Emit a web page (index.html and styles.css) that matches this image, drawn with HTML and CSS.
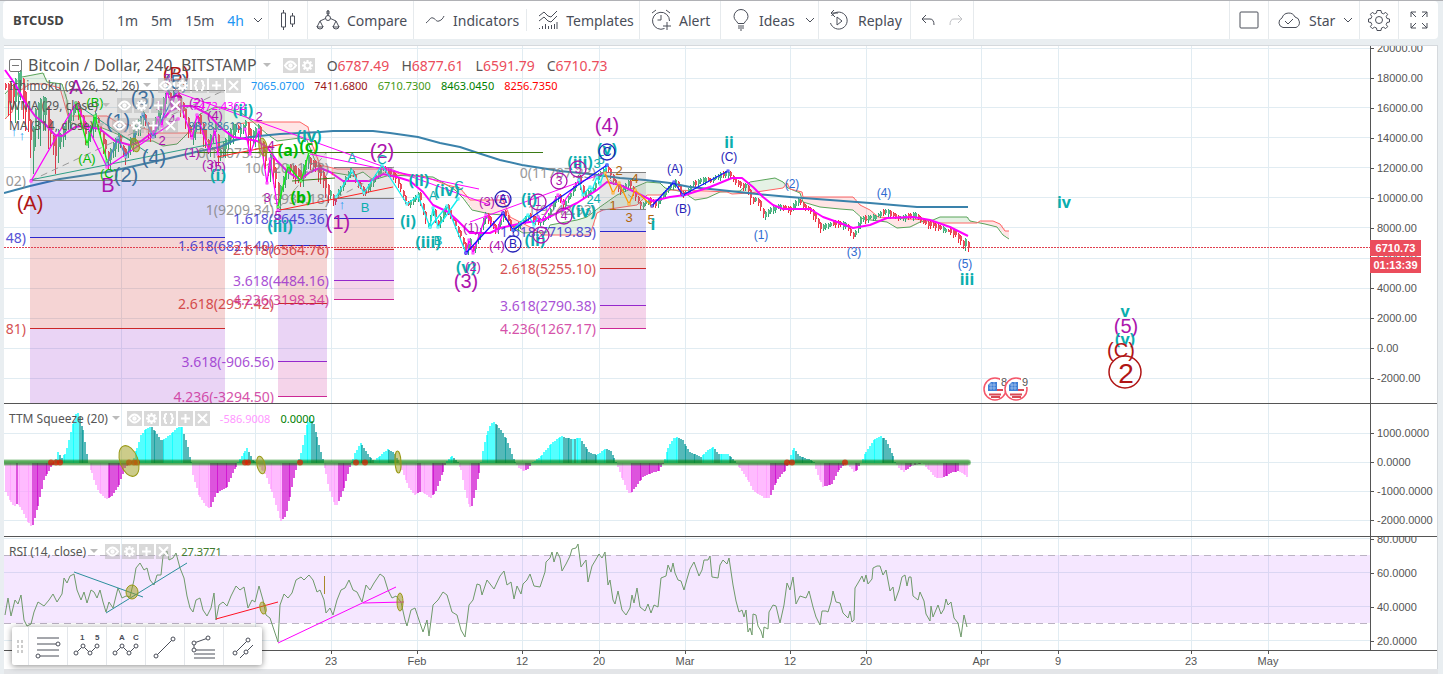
FILE: index.html
```
<!DOCTYPE html>
<html lang="en">
<head>
    <meta charset="UTF-8">
    <meta name="viewport" content="width=device-width, initial-scale=1.0">
    <title>BTCUSD</title>
    <link rel="stylesheet" href="styles.css">
</head>
<body>
    <!-- Shared icons -->
    <svg class="sprite" aria-hidden="true">
        <symbol id="i-caret" viewBox="0 0 10 6"><path d="M1 1l4 4 4-4"/></symbol>
        <symbol id="i-eye" viewBox="0 0 15 15"><path d="M2 7.500q5.500-8 11 0q-5.500 8-11 0z"/><circle cx="7.500" cy="7.500" r="1.200"/></symbol>
        <symbol id="i-gear" viewBox="0 0 15 15"><circle cx="7.500" cy="7.500" r="3"/><path d="M7.500 2v2M7.500 11v2M2 7.500h2M11 7.500h2M3.600 3.600l1.400 1.400M10 10l1.400 1.400M11.400 3.600L10 5M5 10l-1.400 1.400"/></symbol>
        <symbol id="i-code" viewBox="0 0 15 15"><path d="M6 3H5L4 4v2L3 7.500 4 9v2l1 1h1M9 3h1l1 1v2l1 1.500L11 9v2l-1 1H9"/></symbol>
        <symbol id="i-plus" viewBox="0 0 15 15"><path d="M7.500 3v9M3 7.500h9"/></symbol>
        <symbol id="i-close" viewBox="0 0 15 15"><path d="M3 3l9 9M12 3l-9 9"/></symbol>
    </svg>

    <!-- Top toolbar -->
    <header class="toolbar">
        <div class="group symbol"><button class="bold">BTCUSD</button></div>
        <div class="group intervals">
            <button>1m</button><button>5m</button><button>15m</button><button class="active">4h</button>
            <button aria-label="More intervals"><svg class="caret"><use href="#i-caret"/></svg></button>
        </div>
        <div class="group square">
            <button aria-label="Candles"><svg width="18" height="22" viewBox="0 0 18 22"><path d="M4.500 1v3M4.500 18v3M2.500 4h4v14h-4zM13.500 4v3M13.500 15v3M11.500 7h4v8h-4z"/></svg></button>
        </div>
        <div class="group compare">
            <button><svg width="24" height="22" viewBox="0 0 24 22"><path d="M12 1v6M11 2v3h2V2zM9.500 9.500L4 12M14.500 9.500L20 12M4 12l-3 6h6zM20 12l-3 6h6z"/><circle cx="12" cy="9" r="2.500"/><path d="M1 17a3 3 0 0 0 6 0M17 17a3 3 0 0 0 6 0"/></svg>Compare</button>
        </div>
        <div class="group studies">
            <button class="indicators"><svg width="20" height="10" viewBox="0 0 20 10"><path d="M1 8c4-3 4-6 7-5s3 4 6 3 4-3 5-5"/></svg>Indicators</button>
            <button class="templates"><svg width="20" height="20" viewBox="0 0 20 20"><path d="M1 6l5-4 4 4 3 1 6-6M1 11l5-4 4 4 3 1 6-6M1.500 18v1M4.500 16v3M7.500 14v5M10.500 16v3M13.500 15v4M16.500 14v5M19 12v7"/></svg>Templates</button>
        </div>
        <div class="group alert">
            <button><svg width="22" height="22" viewBox="0 0 22 22"><path d="M13.500 19.500A8.500 8.500 0 1 1 18.500 12M10 6v5H6.500M1 4l4-3M15 1l4 3M16 13v8M12 17h8"/></svg>Alert</button>
        </div>
        <div class="group ideas">
            <button><svg width="16" height="22" viewBox="0 0 16 22"><path d="M5 14.500C4 12 1 11 1 7.500a7 7 0 0 1 14 0c0 3.500-3 4.500-4 7zM5 17h6M5 19h6M7 21h2"/></svg>Ideas<svg class="caret"><use href="#i-caret"/></svg></button>
        </div>
        <div class="group replay">
            <button><svg width="20" height="22" viewBox="0 0 20 22"><path d="M2.500 7A8.500 8.500 0 1 1 1.500 14M5 1L2 4l4 4M2 4h7M8 8l5 4-5 4z"/></svg>Replay</button>
        </div>
        <div class="group history">
            <button aria-label="Undo"><svg width="14" height="12" viewBox="0 0 14 12"><path d="M5 1L1 5l4 4M1 5h8q4 0 4 6"/></svg></button>
            <button class="off" aria-label="Redo"><svg width="14" height="12" viewBox="0 0 14 12"><path d="M9 1l4 4-4 4M13 5H5q-4 0-4 6"/></svg></button>
        </div>
        <div class="group spacer"></div>
        <div class="group square">
            <button aria-label="Layout"><svg width="20" height="18" viewBox="0 0 20 18"><rect x="1" y="1" width="18" height="16" rx="1"/></svg></button>
        </div>
        <div class="group star">
            <button><svg width="24" height="18" viewBox="0 0 24 18"><path d="M6 16.500a5 5 0 0 1-1-9.500 7 7 0 0 1 13-1 5.500 5.500 0 0 1 1 10.500zM8 10l3 3 5-5"/></svg>Star<svg class="caret"><use href="#i-caret"/></svg></button>
        </div>
        <div class="group square">
            <button aria-label="Settings"><svg width="22" height="22" viewBox="0 0 22 22"><circle cx="11" cy="11" r="3.500"/><path d="M9 1.500h4l.5 2.500 2 .8 2.200-1.400 1.900 1.900-1.400 2.200.8 2 2.500.5v3l-2.500.5-.8 2 1.400 2.200-1.900 1.900-2.200-1.400-2 .8-.5 2.500H9l-.5-2.500-2-.8-2.200 1.400-1.900-1.900 1.400-2.200-.8-2-2.500-.5V10l2.500-.5.8-2-1.400-2.200 1.900-1.900 2.200 1.400 2-.8z"/></svg></button>
        </div>
        <div class="group square">
            <button aria-label="Full screen"><svg width="18" height="18" viewBox="0 0 18 18"><path d="M1 6V1h5M1 1l5 5M12 1h5v5M17 1l-5 5M1 12v5h5M1 17l5-5M17 12v5h-5M17 17l-5-5"/></svg></button>
        </div>
    </header>

    <main class="chart">
        <!-- Price pane -->
        <section class="pane price-pane">
            <svg class="plot" id="price"></svg>
            <ol class="scale">
                <li>20000.00</li><li>18000.00</li><li>16000.00</li><li>14000.00</li><li>12000.00</li><li>10000.00</li>
                <li>8000.00</li><li>6000.00</li><li>4000.00</li><li>2000.00</li><li>0.00</li><li>-2000.00</li>
            </ol>
            <div class="last-price"><span>6710.73</span><span>01:13:39</span></div>
            <div class="legend">
                <div class="row main-row">
                    <button class="collapse" aria-label="Collapse"></button>
                    <span class="name">Bitcoin / Dollar, 240, BITSTAMP</span><i class="arrow"></i>
                    <span class="tools" data-icons="eye gear"></span>
                    <span class="ohlc">O<b>6787.49</b></span><span class="ohlc">H<b>6877.61</b></span>
                    <span class="ohlc">L<b>6591.79</b></span><span class="ohlc">C<b>6710.73</b></span>
                </div>
                <div class="row">
                    <span class="study">Ichimoku (9, 26, 52, 26)</span><i class="arrow"></i>
                    <span class="tools" data-icons="eye gear code plus close"></span>
                    <span class="v-blue">7065.0700</span><span class="v-brown">7411.6800</span><span class="v-lime">6710.7300</span>
                    <span class="v-green">8463.0450</span><span class="v-red">8256.7350</span>
                </div>
                <div class="row">
                    <span class="study">WMA (29, close)</span><i class="arrow"></i>
                    <span class="tools" data-icons="eye gear plus close"></span>
                    <span class="v-magenta">7472.4362</span>
                </div>
                <div class="row">
                    <span class="study">MA (314, close)</span><i class="arrow"></i>
                    <span class="tools" data-icons="eye gear plus close"></span>
                    <span class="v-steel">9828.8610</span>
                </div>
            </div>
        </section>

        <!-- TTM Squeeze pane -->
        <section class="pane ttm-pane">
            <svg class="plot" id="ttm"></svg>
            <ol class="scale">
                <li>1000.0000</li><li>0.0000</li><li>-1000.0000</li><li>-2000.0000</li>
            </ol>
            <div class="legend">
                <div class="row">
                    <span class="study">TTM Squeeze (20)</span><i class="arrow"></i>
                    <span class="tools" data-icons="eye gear code plus close"></span>
                    <span class="v-pink">-586.9008</span><span class="v-green">0.0000</span>
                </div>
            </div>
        </section>

        <!-- RSI pane -->
        <section class="pane rsi-pane">
            <svg class="plot" id="rsi"></svg>
            <ol class="scale">
                <li>80.0000</li><li>60.0000</li><li>40.0000</li><li>20.0000</li>
            </ol>
            <div class="legend">
                <div class="row">
                    <span class="study">RSI (14, close)</span><i class="arrow"></i>
                    <span class="tools" data-icons="eye gear plus close"></span>
                    <span class="v-rsi">27.3771</span>
                </div>
            </div>
        </section>

        <svg class="dates" id="dates"></svg>

        <!-- Favourite drawing tools -->
        <div class="drawing-bar">
            <span class="grip"></span>
            <button aria-label="Fib extension"><svg viewBox="0 0 30 26"><path d="M4 5h22M4 11h19M4 17h22M7 23h19"/><circle cx="25" cy="11" r="2"/><circle cx="5" cy="23" r="2"/></svg></button>
            <button aria-label="Impulse wave"><svg viewBox="0 0 30 26"><path d="M4 20l7-7 7 7 7-7"/><circle cx="4" cy="20" r="2"/><circle cx="11" cy="13" r="2"/><circle cx="18" cy="20" r="2"/><circle cx="25" cy="13" r="2"/><text x="8" y="7">1</text><text x="23" y="7">5</text></svg></button>
            <button aria-label="Correction wave"><svg viewBox="0 0 30 26"><path d="M4 20l7-7 7 7 7-7"/><circle cx="4" cy="20" r="2"/><circle cx="11" cy="13" r="2"/><circle cx="18" cy="20" r="2"/><circle cx="25" cy="13" r="2"/><text x="8" y="7">A</text><text x="22" y="7">C</text></svg></button>
            <button aria-label="Trend line"><svg viewBox="0 0 30 26"><path d="M6 23L23 6"/><circle cx="6" cy="23" r="2"/><circle cx="23" cy="6" r="2"/></svg></button>
            <button aria-label="Fib channel"><svg viewBox="0 0 30 26"><path d="M5 10l14-5M5 10v7h21M5 21h21M5 25h21"/><circle cx="19" cy="5" r="2"/><circle cx="5" cy="10" r="2"/><circle cx="5" cy="17" r="2"/></svg></button>
            <button aria-label="Parallel channel"><svg viewBox="0 0 30 26"><path d="M7 20L20 7M12 25l13-13"/><circle cx="7" cy="20" r="2"/><circle cx="20" cy="7" r="2"/><circle cx="18" cy="19" r="2"/></svg></button>
        </div>
    </main>
    <footer class="strip"></footer>
    <script src="script.js"></script>
</body>
</html>
```
FILE: styles.css
```
* {
    box-sizing: border-box;
}

body {
    margin: 0;
    min-height: 100vh;
    display: flex;
    flex-direction: column;
    background: #e9eef1;
    border-top: 1px solid #b0b1b5;
    font-family: "Noto Sans", sans-serif;
    font-size: 11px;
    color: #555;
}

button {
    padding: 0;
    border: none;
    background: none;
    font: inherit;
    color: inherit;
    cursor: pointer;
}

.sprite {
    position: absolute;
    width: 0;
    height: 0;
}

/* Toolbar */
.toolbar {
    display: flex;
    height: 38px;
    margin: 0 5px 6px 3px;
    background: #fff;
    border-radius: 4px;
    font-size: 14px;
    color: #4a4e59;
}

.group {
    display: flex;
    align-items: center;
    border-right: 1px solid #e6eaed;
}

.group:last-child {
    border-right: none;
}

.group button {
    display: flex;
    align-items: center;
    white-space: nowrap;
}

.group svg {
    fill: none;
    stroke: #4a4e59;
    flex: none;
}

.group .caret {
    width: 10px;
    height: 6px;
}

.symbol {
    width: 101px;
    padding-left: 10px;
}

.bold {
    font-weight: bold;
    color: #444;
}

.group .bold {
    font-size: 13px;
}

.intervals {
    width: 165px;
    padding-left: 13px;
    gap: 13px;
}

.intervals .caret {
    margin-left: -4px;
}

.active {
    color: #2196f3;
}

.square {
    width: 39px;
    justify-content: center;
}

.compare {
    width: 106px;
    padding-left: 8px;
}

.compare button {
    gap: 7px;
}

.studies {
    width: 226px;
    padding-left: 11px;
}

.studies button {
    gap: 8px;
}

.studies .templates {
    margin-left: 7px;
    padding-left: 11px;
    height: 22px;
    border-left: 1px solid #e6eaed;
}

.alert {
    width: 81px;
    padding-left: 11px;
}

.alert button {
    gap: 6px;
}

.replay button {
    gap: 9px;
}

.ideas {
    width: 98px;
    padding-left: 12px;
}

.ideas button {
    gap: 10px;
}

.replay {
    width: 92px;
    padding-left: 10px;
}

.history {
    width: 63px;
    padding-left: 10px;
    gap: 14px;
}

.off {
    opacity: 0.35;
}

.spacer {
    flex: 1;
}

.star {
    width: 91px;
    padding-left: 8px;
}

.star button {
    gap: 8px;
}

/* Chart */
.chart {
    position: relative;
    display: flex;
    flex-direction: column;
    margin: 0 5px 0 4px;
    background: #fff;
    border-top: 1px solid #d5d9dd;
    border-right: 1px solid #d5d9dd;
}

.pane {
    position: relative;
    display: grid;
    grid-template-columns: 1fr 67px;
    border-bottom: 1px solid #555;
    overflow: hidden;
}

.plot {
    width: 100%;
    height: 100%;
    overflow: hidden;
}

.price-pane {
    height: 358px;
}

.ttm-pane {
    height: 133px;
}

.rsi-pane {
    height: 114px;
}

.scale {
    list-style: none;
    margin: -13px 0 0;
    padding: 0;
    height: 400px;
    border-left: 1px solid #555;
    font: 11px/30px "Liberation Sans", sans-serif;
}

.ttm-pane .scale {
    margin-top: 0;
    padding-top: 15px;
    line-height: 29px;
}

.rsi-pane .scale {
    margin-top: -15px;
    line-height: 34px;
}

.scale li::before {
    content: "";
    display: inline-block;
    width: 3px;
    height: 1px;
    margin-right: 3px;
    background: #555;
    vertical-align: 3px;
}

.last-price {
    position: absolute;
    right: 16px;
    top: 194px;
    width: 51px;
    display: flex;
    flex-direction: column;
    gap: 1px;
    font: bold 11px/16px "Liberation Sans", sans-serif;
    color: #fff;
    text-align: center;
}

.last-price span {
    background: #eb4d5c;
}

/* Legends */
.legend {
    position: absolute;
    left: 5px;
    top: 9px;
    white-space: nowrap;
}

.ttm-pane .legend,
.rsi-pane .legend {
    top: 4px;
}

.row {
    display: flex;
    align-items: center;
    gap: 10px;
    height: 20px;
    font-size: 11px;
}

.study {
    font-size: 12px;
}

.main-row {
    font-size: 14px;
    gap: 12px;
}

.name {
    font-size: 16px;
    margin-left: -6px;
}

.ohlc b {
    font-weight: normal;
    color: #eb4d5c;
}

.collapse {
    width: 13px;
    height: 13px;
    border: 1px solid #777;
    border-radius: 2px;
    background: linear-gradient(#777, #777) center / 7px 1px no-repeat;
}

.arrow {
    margin-left: -6px;
    border: 4px solid transparent;
    border-top-color: #bbb;
    border-bottom-width: 0;
}

.tools {
    display: flex;
    gap: 2px;
    margin-left: -3px;
}

.main-row .tools {
    margin-left: 0;
}

.tools button {
    width: 15px;
    height: 15px;
    background: rgba(180, 180, 180, 0.5);
}

.tools svg {
    display: block;
    width: 15px;
    height: 15px;
    fill: none;
    stroke: #fff;
    stroke-width: 2;
}

.v-blue { color: #2196f3; }
.v-brown { color: #991515; }
.v-lime { color: #459915; }
.v-green { color: #008000; }
.v-red { color: #f00; }
.v-magenta { color: #f0f; }
.v-steel { color: #3679a5; }
.v-pink { color: #f9f; }
.v-rsi { color: #3f7a2e; }

/* Plot labels */
.fib { font-size: 14px; opacity: 0.8; }
.wave { font-family: "Liberation Sans", sans-serif; font-size: 13px; }
.wave-s { font-family: "Liberation Sans", sans-serif; font-size: 12px; }
.wave-l { font-family: "Liberation Sans", sans-serif; font-size: 20px; }
.wave-xl { font-family: "Liberation Sans", sans-serif; font-size: 28px; }
.minute { font-family: "Noto Sans", sans-serif; font-size: 16px; font-weight: bold; }
.date { font-family: "Liberation Sans", sans-serif; font-size: 11px; fill: #555; }

.dates {
    display: block;
    width: 100%;
    height: 18px;
}

/* Floating drawing toolbar */
.drawing-bar {
    position: absolute;
    left: 8px;
    bottom: 4px;
    display: flex;
    height: 38px;
    background: #fff;
    border-radius: 2px;
    box-shadow: 0 1px 6px rgba(0, 0, 0, 0.45);
}

.drawing-bar button {
    width: 39px;
    border-left: 1px solid #e3e6ea;
}

.drawing-bar svg {
    display: block;
    width: 30px;
    height: 26px;
    margin: 0 auto;
    fill: none;
    stroke: #4a4e59;
}

.drawing-bar circle {
    fill: #fff;
}

.drawing-bar text {
    fill: #4a4e59;
    stroke: none;
    font: bold 8px "Liberation Sans", sans-serif;
}

.grip {
    width: 8px;
    height: 15px;
    margin: 12px 4px;
    background: radial-gradient(#ccc 1px, transparent 1px) 0 0 / 4px 5px;
}

.strip {
    flex: 1;
    margin: 0 5px 0 4px;
    background: #e3e5e8;
}
```
FILE: script.js
```
const NS = 'http://www.w3.org/2000/svg';

function add(parent, tag, attrs, text) {
    const el = document.createElementNS(NS, tag);
    for (const k in attrs) el.setAttribute(k, attrs[k]);
    if (text) el.textContent = text;
    parent.appendChild(el);
    return el;
}

// "x,y x,y" -> [[x, y], ...]
function parse(s) {
    return s.trim().split(/\s+/).map(p => p.split(',').map(Number));
}

function at(points, x) {
    for (let i = 1; i < points.length; i++) {
        const [x0, y0] = points[i - 1], [x1, y1] = points[i];
        if (x <= x1) return y0 + (y1 - y0) * (x - x0) / (x1 - x0 || 1);
    }
    return points[points.length - 1][1];
}

function layer(id, top) {
    return add(document.getElementById(id), 'g', { transform: `translate(-4,${-top})` });
}

function line(g, pts, color, width = 1, extra = {}) {
    return add(g, 'polyline', { points: pts, fill: 'none', stroke: color, 'stroke-width': width, 'stroke-linejoin': 'round', ...extra });
}

function label(g, x, y, text, color, cls = 'wave', anchor = 'middle') {
    add(g, 'text', { x, y, fill: color, class: cls, 'text-anchor': anchor, 'dominant-baseline': 'central' }, text);
}

function wave(g, pts, color) {
    line(g, pts, color, 1.3);
    parse(pts).forEach(([x, y]) => add(g, 'rect', { x: x - 1, y: y - 1, width: 2, height: 2, fill: '#fff', stroke: color, 'stroke-width': 0.8 }));
}

function oval(g, cx, cy, rx, ry, rot = 0) {
    add(g, 'ellipse', { cx, cy, rx, ry, fill: '#999915', 'fill-opacity': 0.5, stroke: '#999915', transform: `rotate(${rot} ${cx} ${cy})` });
}

function grid(g, top, bottom, rows) {
    [121, 255, 331, 417, 522, 599, 685, 790, 866, 981, 1058, 1191, 1268].forEach(x =>
        add(g, 'path', { d: `M${x + 0.5} ${top}V${bottom}`, stroke: '#e1ecf2' }));
    rows.forEach(y => add(g, 'path', { d: `M4 ${y + 0.5}H3000`, stroke: '#e1ecf2' }));
}

// Legend buttons
document.querySelectorAll('.tools').forEach(el => {
    el.dataset.icons.split(' ').forEach(name => {
        const b = document.createElement('button');
        b.setAttribute('aria-label', name);
        b.innerHTML = `<svg><use href="#i-${name}"/></svg>`;
        el.appendChild(b);
    });
});

/* ---------- Price ---------- */
const p = layer('price', 46);
grid(p, 46, 403, [48, 78, 107, 137, 167, 197, 227, 258, 288, 318, 348, 378]);

// Ichimoku cloud
const spanA = parse(`5,94 12,86 22,77 43,73 47,82 62,84 67,100 69,122 80,126 100,127 117,134 133,141 153,141 163,146 177,144
    187,134 200,114 213,108 220,107 240,112 253,122 267,134 277,141 300,138 307,140 317,166 330,172 353,176 363,172 373,180 390,175
    433,177 447,185 455,190 463,198 472,210 490,214 503,215 510,225 523,233 547,232 550,225 577,220 587,217 600,207 617,195 633,188
    647,182 660,183 665,188 683,192 695,200 707,198 720,192 740,191 750,182 775,178 783,182 788,188 800,193 803,202 820,207 840,209
    853,210 863,219 887,222 897,228 910,227 920,222 933,220 940,217 967,217 970,221 985,224 997,227 1003,235 1009,239`);
const spanB = parse(`5,119 12,112 18,92 30,84 45,84 60,88 68,116 107,116 115,121 133,126 150,130 155,133 202,133 210,145 217,152
    230,142 237,124 253,122 300,122 308,127 312,144 320,165 337,169 387,169 400,174 423,176 447,185 460,188 470,200 503,200 510,217
    530,227 543,235 590,235 597,213 603,210 637,205 647,195 660,195 670,190 707,191 727,192 732,194 750,193 763,191 783,188
    787,183 790,189 802,192 803,197 853,197 860,205 870,210 878,217 893,218 927,220 935,223 977,223 980,221 993,221 1000,224
    1005,231 1009,231`);
for (let x = 5; x < 1009; x += 2) {
    const a = at(spanA, x), b = at(spanB, x);
    add(p, 'rect', { x, y: Math.min(a, b), width: 2, height: Math.abs(a - b), fill: a < b ? '#008000' : '#ff0000', 'fill-opacity': 0.1, 'shape-rendering': 'crispEdges' });
}
line(p, spanA.join(' '), '#5aa45a');
line(p, spanB.join(' '), '#f66');

// Candles
const closes = parse(`5,88 12,105 20,90 27,115 31,150 35,125 45,115 55,150 60,140 68,120 76,103 82,125 87,143 95,116 100,130 107,163
    118,138 125,155 143,115 150,135 158,118 167,92 175,95 185,120 191,137 197,117 207,150 215,125 218,155 225,145 233,130 245,125
    250,142 258,130 265,160 267,180 270,160 278,200 287,165 300,180 308,158 316,168 328,195 335,197 350,170 364,193 382,166 395,178
    407,204 418,195 427,226 432,208 437,226 446,206 455,225 466,252 470,240 472,252 485,215 496,230 503,212 512,230 527,215 538,222
    547,215 557,195 563,205 578,178 583,195 592,190 598,175 607,168 613,180 620,190 628,183 640,205 648,200 655,205 665,190 675,182
    682,195 693,183 710,178 728,173 740,185 747,188 750,200 757,198 763,215 770,210 780,205 790,210 797,200 810,210 820,228 830,222
    845,225 853,235 860,220 875,215 882,211 900,217 915,215 930,225 950,230 960,240 963,247 965,240 968,247`);
for (let x = 5, i = 0; x < 969; x += i % 2 ? 2 : 3, i++) {
    const spread = x < 60 ? 22 : x < 340 ? 8 : 3;
    const n = Math.abs(Math.sin(i * 12.9)) * spread, m = Math.abs(Math.sin(i * 7.3)) * spread;
    const y0 = at(closes, x - 2), y1 = at(closes, x);
    const up = y1 + Math.sin(i * 1.1) < y0;
    const top = Math.round(Math.min(y0, y1) - n), bottom = Math.round(Math.max(y0, y1) + m + 2);
    add(p, 'rect', { x, y: top, width: 1, height: bottom - top, fill: up ? '#2fa56f' : '#f0283c' });
    add(p, 'rect', { x, y: top + 1, width: 2, height: Math.max(2, Math.round((bottom - top) / 2)), fill: up ? '#53b987' : '#eb4d5c' });
}

// Moving averages
line(p, `4,193 30,186 60,179 107,172 121,169 170,158 200,151 220,147 235,140 250,137 280,134 320,132 333,131 373,131 390,133 418,137
    440,143 460,147 478,153 500,160 522,165 560,171 590,174 620,178 645,180 670,183 690,187 720,190 757,194 790,197 830,200 870,203
    917,207 968,207`, '#3a82ab', 2);
line(p, `5,70 15,84 25,102 35,116 45,124 55,135 62,136 75,127 83,126 100,129 115,141 130,145 140,142 153,132 170,111 182,106 192,106
    208,114 220,127 233,137 257,141 267,147 277,161 288,172 300,180 310,172 320,168 330,172 343,181 370,181 383,174 397,177 410,181
    423,192 433,205 448,212 457,220 470,233 490,233 500,228 523,223 543,220 563,210 577,203 597,190 607,182 620,185 637,193 653,201
    670,197 685,195 710,187 732,178 742,178 753,187 763,197 773,205 783,209 810,209 823,217 840,223 853,228 870,225 887,218 913,217
    930,220 950,227 968,236`, '#f0f', 2);

// Fib extensions: x0, x1, levels, captions
const FIB = ['#808080', '#2d28cd', '#cc2828', '#9528cc', '#cc2895'];
const LINES = ['#808080', '#808080', '#2d28cd', '#cc2828', '#9528cc', '#cc2895'];
[
    [30, 225, [90, 180, 237, 328, 404], ['', '02)', '48)', '81)'], 26],
    [278, 327, [152, 209, 245, 303, 361, 396], ['0(13073.31)', '1(9209.34)', '1.618(6821.40)', '2.618(2957.42)', '3.618(-906.56)', '4.236(-3294.50)'], 274],
    [334, 394, [167, 198, 218, 249, 280, 299], ['10(12011.78)', '1(9934.18)', '1.618(8645.36)', '2.618(6564.76)', '3.618(4484.16)', '4.236(3198.34)'], 329],
    [600, 646, [172, 209, 231, 268, 305, 328], ['0(11707.23)', '1(9242.93)', '1.618(7719.83)', '2.618(5255.10)', '3.618(2790.38)', '4.236(1267.17)'], 596]
].forEach(([x0, x1, levels, captions, right], box) => {
    // the first extension has its 0 and 1 levels as one grey band
    const lineColor = i => box === 0 && i > 0 ? LINES[i] : LINES[i];
    levels.forEach((y, i) => {
        if (i < levels.length - 1)
            add(p, 'rect', { x: x0, y, width: x1 - x0, height: levels[i + 1] - y, fill: FIB[i], 'fill-opacity': 0.2 });
        add(p, 'path', { d: `M${x0} ${y + 0.5}H${x1}`, stroke: lineColor(i) });
        if (captions[i]) label(p, right, y, captions[i], LINES[i], 'fib', 'end');
    });
});

// Trend lines
const dash = { 'stroke-dasharray': '7 5' };
line(p, '30,181 225,90', '#999', 1, dash);
line(p, '336,198 394,167', '#999', 1, dash);
line(p, '278,209 327,152', '#999', 1, dash);
line(p, '600,172 646,209', '#999', 1, dash);
line(p, '30,180 237,139', '#2f9e86');
line(p, '76,104 148,153', '#2f9e86');
line(p, '197,152.500 543,152.500', '#3b7a14');
line(p, '217,157 283,144', '#f22');
line(p, '280,210 393,187', '#f22');
line(p, '292,181 335,178', '#3b7a14');
line(p, '176,92 490,205', '#f0f');
line(p, '310,154 479,189', '#f0f');
line(p, '470,222 607,172', '#f0f');
add(p, 'path', { d: 'M4 247.5H3000', stroke: '#e0404f', 'stroke-dasharray': '2 1', 'shape-rendering': 'crispEdges' });

// Elliott waves
wave(p, '31,181 76,103 107,167 178,119', '#f0f');
wave(p, '153,136 158,118 162,126 167,91 172,106 176,92 192,138 197,115 209,151 215,130 218,154', '#f0f');
wave(p, '76,103 87,144 95,116 107,161', '#1e1');
wave(p, '107,164 118,138 126,157 143,114 153,137 176,92', '#4a86c8');
wave(p, '245,129 250,154 259,130 267,183 270,159 278,210', '#f0f');
wave(p, '278,207 288,166 301,181 309,152', '#1e1');
wave(p, '336,197 352,171 364,193 382,165 407,204 418,196 430,227 447,206 466,253', '#1ee');
wave(p, '430,227 433,208 438,227 458,199', '#1ee');
wave(p, '466,253 469,240 473,253 486,215 497,231 503,213', '#f0f');
wave(p, '513,230 528,215 534,225 538,217', '#1ee');
wave(p, '538,217 541,221 558,195 563,203 579,180', '#f0f');
wave(p, '579,180 583,195 590,187 592,190 597,177 600,184 607,165', '#1ee');
wave(p, '605,173 613,193 619,183 629,204 635,190 652,206', '#f90');
wave(p, '466,253 503,213 513,230 607,165', '#11f');
wave(p, '652,206 674,182 683,195 728,171', '#11f');
oval(p, 135, 145, 4, 7, -20);
oval(p, 263, 147, 4, 9, -10);

const teal = '#0aaeae', purple = '#ad14ad', steel = '#3d6f9e', green = '#0b0', navy = '#2522b8', blue = '#2f6bd0', brown = '#b0650c';
[
    [30, 203, '(A)', '#b01515', 'wave-l'], [76, 87, 'A', purple, 'wave-l'], [108, 185, 'B', purple, 'wave-l'],
    [176, 74, '(B)', '#b01515', 'wave-l'], [95, 102, '(B)', green], [87, 158, '(A)', green], [109, 173, '(C)', green],
    [118, 121, '(1)', steel, 'wave-l'], [126, 175, '(2)', steel, 'wave-l'], [143, 98, '(3)', steel, 'wave-l'],
    [154, 157, '(4)', steel, 'wave-l'], [176, 82, '(5)', steel, 'wave-l'], [159, 105, '1', purple], [162, 140, '2', purple],
    [167, 78, '3', purple], [172, 119, '4', purple], [176, 102, 'C', purple, 'wave-l'], [192, 152, '(1)', purple],
    [197, 102, '(2)', purple], [210, 164, '(3)', purple], [215, 115, '(4)', purple], [218, 166, '(5)', purple],
    [218, 175, '(i)', teal, 'minute'], [243, 110, '(ii)', teal, 'minute'], [280, 226, '(iii)', teal, 'minute'],
    [309, 136, '(iv)', teal, 'minute'], [259, 116, '2', purple], [267, 197, '3', purple],
    [271, 145, '4', purple], [278, 215, '5', purple], [288, 150, '(a)', green, 'minute'], [301, 197, '(b)', green, 'minute'],
    [309, 146, '(c)', green, 'minute'], [338, 222, '(1)', purple, 'wave-l'], [382, 151, '(2)', purple, 'wave-l'],
    [466, 281, '(3)', purple, 'wave-l'], [607, 125, '(4)', purple, 'wave-l'], [352, 157, 'A', teal], [365, 207, 'B', teal],
    [382, 159, 'C', teal], [408, 221, '(i)', teal, 'minute'], [419, 180, '(ii)', teal, 'minute'],
    [428, 242, '(iii)', teal, 'minute'], [447, 190, '(iv)', teal, 'minute'], [466, 267, '(v)', teal, 'minute'],
    [433, 195, 'A', teal], [438, 240, 'B', teal], [459, 185, 'C', teal], [471, 227, '(1)', purple], [473, 266, '(2)', purple],
    [487, 201, '(3)', purple], [497, 245, '(4)', purple], [503, 199, '(5)', purple], [529, 199, '(i)', teal, 'minute'],
    [535, 240, '(ii)', teal, 'minute'], [580, 162, '(iii)', teal, 'minute'], [583, 211, '(iv)', teal, 'minute'],
    [607, 149, '(v)', teal, 'minute'], [590, 199, '2', teal], [597, 198, '4', teal], [597, 163, '3', teal], [601, 159, '5', teal],
    [619, 170, '2', brown], [613, 205, '1', brown], [629, 217, '3', brown], [635, 178, '4', brown], [651, 219, '5', brown],
    [653, 224, 'i', teal, 'minute'], [675, 169, '(A)', navy, 'wave-s'], [683, 209, '(B)', navy, 'wave-s'],
    [729, 157, '(C)', navy, 'wave-s'], [729, 142, 'ii', teal, 'minute'], [761, 235, '(1)', blue, 'wave-s'],
    [792, 184, '(2)', blue, 'wave-s'], [854, 252, '(3)', blue, 'wave-s'], [884, 193, '(4)', blue, 'wave-s'],
    [965, 264, '(5)', blue, 'wave-s'], [967, 279, 'iii', teal, 'minute'], [1064, 202, 'iv', teal, 'minute'],
    [1125, 311, 'v', teal, 'minute'], [1126, 326, '(5)', purple, 'wave-l'], [1125, 339, '(v)', teal, 'minute'],
    [1121, 350, '(C)', '#b01515', 'wave-l'], [1126, 373, '2', '#b01515', 'wave-xl'],
    [14, 131, '↑', '#2196f3'], [22, 135, '↑', '#2196f3'], [342, 204, '↑', '#2196f3'], [333, 170, '↓', '#f55']
].forEach(a => label(p, ...a));

[[503, 199, 'A', navy], [513, 244, 'B', navy], [607, 152, 'C', navy], [538, 202, '1', purple], [541, 235, '2', purple],
    [559, 181, '3', purple], [564, 216, '4', purple], [578, 169, '5', purple]].forEach(([x, y, t, c]) => {
    add(p, 'circle', { cx: x, cy: y, r: 8, fill: 'none', stroke: c, 'stroke-width': 1.3 });
    label(p, x, y, t, c, 'wave-s');
});
add(p, 'circle', { cx: 1125, cy: 372, r: 16, fill: 'none', stroke: '#b01515', 'stroke-width': 1.5 });

// Economic events
[[995, '8'], [1016, '9']].forEach(([x, n]) => {
    add(p, 'circle', { cx: x, cy: 389, r: 11, fill: '#fff', stroke: '#f4566a', 'stroke-width': 1.5 });
    add(p, 'path', { d: `M${x} 390h8M${x - 6} 394.500h12M${x - 4} 397h9`, stroke: '#d94a55', 'stroke-width': 2 });
    add(p, 'path', { d: `M${x - 7} 391V385l3-3h6v9z`, fill: '#3f7fd6' });
    add(p, 'path', { d: `M${x - 6} 385h7M${x - 6} 388h7M${x - 4} 383v7M${x - 1} 382v8`, stroke: '#fff', 'stroke-width': 0.4 });
    add(p, 'rect', { x: x + 5, y: 376, width: 8, height: 11, fill: '#fff' });
    label(p, x + 9, 382, n, '#444', 'date');
});

/* ---------- TTM Squeeze ---------- */
const t = layer('ttm', 404);
grid(t, 404, 536, [433, 462, 491, 520]);
const squeeze = parse(`5,492 9,500 13,507 17,503 21,510 26,520 31,528 35,514 39,497 43,480 50,467 54,463 57,452 61,458 65,452 68,440
    72,424 75,414 78,412 82,430 87,460 93,480 98,492 103,497 107,499 112,495 118,485 124,468 129,463 133,458 140,435 146,428 150,426
    156,434 161,441 170,434 177,427 181,427 187,447 190,462 192,475 198,495 204,505 209,509 215,494 226,487 233,471 237,462 240,457
    246,448 252,460 256,463 265,475 272,495 280,521 285,516 292,482 297,462 301,450 306,425 309,417 313,424 318,445 323,462 326,480
    330,495 335,507 341,495 348,470 351,462 353,455 360,443 368,456 373,461 380,455 387,449 393,452 398,462 402,472 408,488 414,495
    420,491 430,498 436,489 442,472 445,462 451,456 457,462 460,470 465,495 470,510 475,490 480,462 483,445 488,428 492,421 496,425
    502,433 506,440 510,451 514,462 517,467 522,471 527,469 532,462 540,456 550,444 560,436 570,439 579,438 588,452 596,455 605,448
    610,451 615,462 620,475 625,488 629,494 635,487 642,477 650,473 658,471 663,462 668,445 673,438 677,437 682,440 688,451 700,457
    706,451 712,447 718,454 727,454 735,462 740,470 747,480 753,492 758,494 763,498 769,498 776,480 785,470 787,462 790,455 793,448
    798,456 810,460 813,462 817,475 822,487 831,484 838,470 845,463 850,468 854,473 860,463 865,452 873,440 880,436 885,440 890,450
    894,462 898,468 903,472 910,466 922,463 928,470 935,478 942,478 950,473 957,471 963,474 968,479`);
for (let i = 0, x = 5; x < 968; i++, x = Math.round(5 + i * 1.8)) {
    const y = Math.round(at(squeeze, x)), prev = at(squeeze, x - 2);
    const color = y < 463 ? (y <= prev ? '#0ff' : '#009696') : (y >= prev ? '#f9f' : '#cc00cc');
    add(t, 'rect', { x, y: Math.min(y, 463), width: 2, height: Math.abs(463 - y), fill: color, 'fill-opacity': 0.67, 'shape-rendering': 'crispEdges' });
}
line(t, '4,462.500 968,462.500', 'rgba(0,128,0,.4)', 6, { 'stroke-linecap': 'round' });
line(t, '4,462.500 968,462.500', 'rgba(0,128,0,.4)', 4, { 'stroke-linecap': 'round' });
[51, 56, 60, 129, 134, 137, 245, 248, 300, 356, 365, 787, 792, 845].forEach(x =>
    add(t, 'circle', { cx: x, cy: 462.5, r: 3, fill: '#e21b00', 'fill-opacity': 0.7 }));
oval(t, 129, 461, 9, 16, -20);
oval(t, 261, 465, 4, 9, -12);
oval(t, 398, 462, 3, 11, -3);

/* ---------- RSI ---------- */
const r = layer('rsi', 537);
grid(r, 537, 650, [538, 572, 606, 640]);
add(r, 'rect', { x: 4, y: 555, width: '100%', height: 68, fill: '#9915ff', 'fill-opacity': 0.1 });
[555, 623].forEach(y => add(r, 'path', { d: `M4 ${y + 0.5}H3000`, stroke: '#bbb3c3', 'stroke-dasharray': '7 5' }));
line(r, `5,615 8,598 11,616 15,600 18,604 21,595 24,620 27,626 31,624 34,612 38,602 44,606 49,600 53,594 57,602 62,594 64,578 67,583
    70,576 74,574 77,590 81,600 84,592 87,603 91,590 94,592 97,598 100,590 103,602 106,612 109,602 113,608 118,588 122,598 126,596
    130,597 134,580 136,568 140,563 144,570 147,568 150,580 154,585 157,575 161,575 163,556 167,551 169,560 173,558 176,553 180,568
    184,578 187,596 190,608 193,612 196,600 200,598 203,610 207,616 211,608 214,593 216,620 219,605 223,602 227,606 231,596 236,586
    240,590 244,587 248,608 252,600 255,602 259,586 263,600 266,615 270,618 274,630 278,642 280,605 284,594 288,598 292,593 296,580
    301,577 304,580 309,575 313,580 317,592 320,590 324,600 326,613 330,608 333,615 337,600 341,590 345,588 349,580 353,590 357,592
    362,602 366,585 370,590 374,583 380,574 384,577 388,590 392,598 396,596 401,602 405,620 407,626 411,610 415,608 419,620 423,632
    427,620 429,636 433,605 438,600 443,592 447,595 452,612 457,615 461,630 465,637 469,605 473,600 477,584 480,585 482,595 487,580
    494,589 500,576 504,571 507,585 511,582 514,599 517,586 521,594 523,584 527,580 530,574 534,586 540,587 545,572 546,562 550,558
    552,552 554,562 557,552 560,558 562,571 566,564 570,556 572,549 576,548 578,544 581,567 586,560 588,582 592,566 595,561 599,554
    602,558 605,552 608,585 610,580 613,600 615,604 618,591 622,610 626,615 630,608 632,595 634,603 637,588 640,607 645,611 648,604
    651,613 654,605 658,607 661,578 666,576 668,565 671,572 673,563 675,573 678,580 681,581 684,590 687,579 690,569 694,562 699,576
    702,570 704,560 708,560 710,556 712,577 718,578 720,565 723,560 727,564 729,558 733,585 736,601 739,612 742,610 744,617 746,610
    748,632 750,628 752,635 753,614 756,615 758,626 761,631 763,638 764,627 768,629 769,612 773,605 776,606 780,623 784,605 787,583
    790,590 793,577 796,604 800,596 806,598 809,591 813,607 816,617 820,625 822,611 826,611 828,612 831,602 833,591 836,602 840,603
    843,613 848,618 850,611 852,622 854,620 855,588 858,583 862,576 864,582 866,575 868,584 872,579 873,568 877,566 880,566 883,575
    886,570 890,591 893,587 895,601 899,590 902,577 905,575 907,586 909,577 911,577 913,596 918,600 920,592 924,601 926,614 930,621
    931,606 933,617 938,605 941,614 944,609 946,599 948,605 951,602 954,618 958,623 961,637 964,615 967,627`, '#6f9a6b');
line(r, '74,572 143,597', '#2b8f9c');
line(r, '106,613 187,563', '#2b8f9c');
line(r, '216,619 278,602', '#f12');
line(r, '278,643 396,587', '#f0f');
line(r, '363,603 404,602', '#f0f');
line(r, '324.500,576 324.500,594', '#a8892a');
oval(r, 132, 592, 6, 7);
oval(r, 263, 608, 3, 6, -12);
oval(r, 400, 602, 3, 9);

/* ---------- Dates ---------- */
const d = layer('dates', 651);
[[331, '23'], [417, 'Feb'], [522, '12'], [599, '20'], [685, 'Mar'], [790, '12'], [866, '20'], [981, 'Apr'], [1058, '9'],
    [1191, '23'], [1268, 'May']].forEach(([x, text]) => {
    add(d, 'path', { d: `M${x + 0.5} 651v3`, stroke: '#555' });
    label(d, x, 661, text, '#555', 'date');
});
```
